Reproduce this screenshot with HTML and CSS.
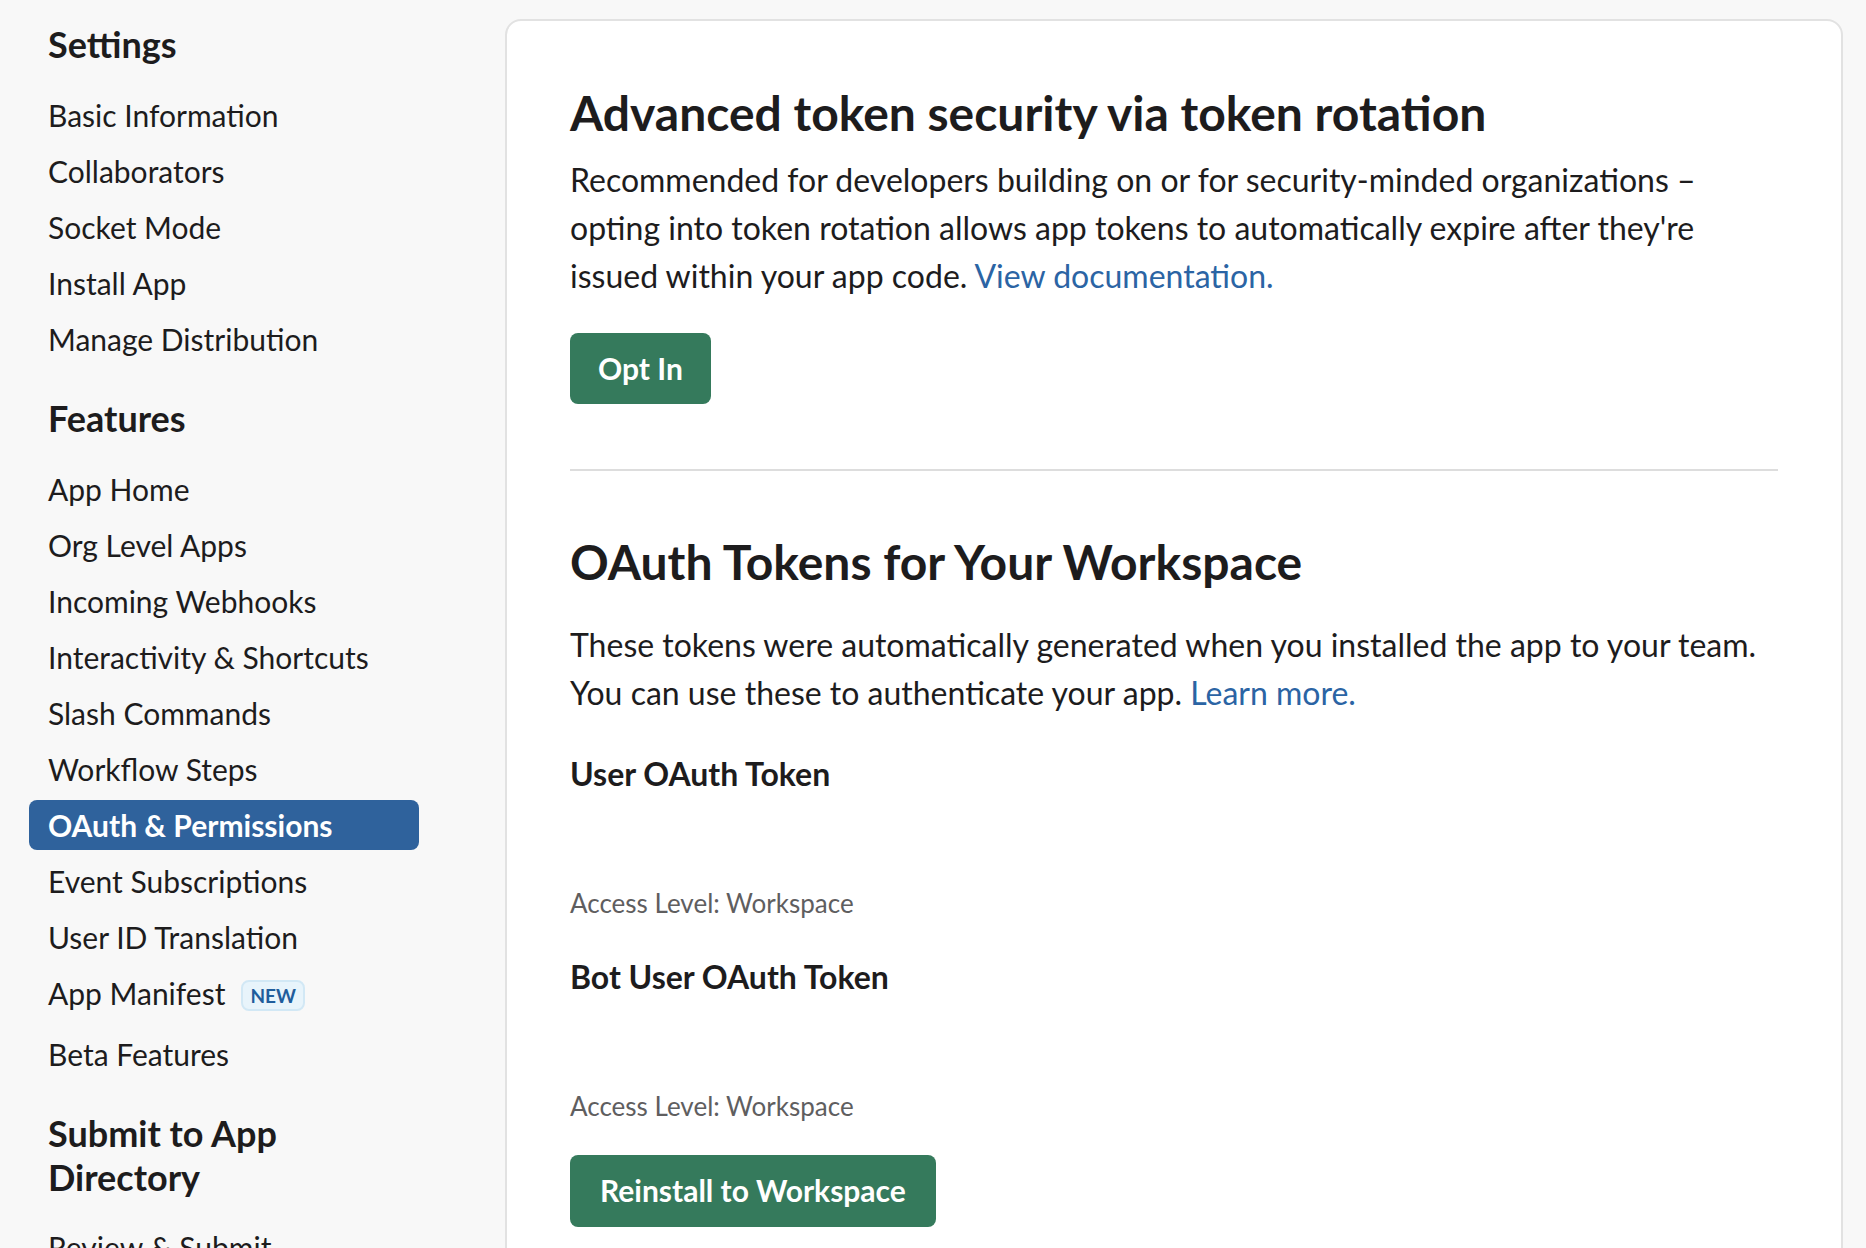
FILE: index.html
```html
<!DOCTYPE html>
<html lang="en">
<head>
<meta charset="utf-8">
<title>OAuth &amp; Permissions</title>
<link rel="stylesheet" href="styles.css">
</head>
<body>
<div class="page">
  <nav class="sidebar">
    <section class="nav-group">
      <h3 class="nav-heading">Settings</h3>
      <a class="nav-item">Basic Information</a>
      <a class="nav-item">Collaborators</a>
      <a class="nav-item">Socket Mode</a>
      <a class="nav-item">Install App</a>
      <a class="nav-item">Manage Distribution</a>
    </section>
    <section class="nav-group group-features">
      <h3 class="nav-heading">Features</h3>
      <a class="nav-item">App Home</a>
      <a class="nav-item">Org Level Apps</a>
      <a class="nav-item">Incoming Webhooks</a>
      <a class="nav-item">Interactivity &amp; Shortcuts</a>
      <a class="nav-item">Slash Commands</a>
      <a class="nav-item">Workflow Steps</a>
      <a class="nav-item active">OAuth &amp; Permissions</a>
      <a class="nav-item">Event Subscriptions</a>
      <a class="nav-item">User ID Translation</a>
      <a class="nav-item with-badge">App Manifest <span class="badge">NEW</span></a>
      <a class="nav-item">Beta Features</a>
    </section>
    <section class="nav-group group-submit">
      <h3 class="nav-heading">Submit to App Directory</h3>
      <a class="nav-item">Review &amp; Submit</a>
    </section>
  </nav>
  <main class="card">
    <h2 class="card-title">Advanced token security via token rotation</h2>
    <p class="card-text">Recommended for developers building on or for security-minded organizations – opting into token rotation allows app tokens to automatically expire after they're issued within your app code. <a class="link">View documentation.</a></p>
    <button class="btn btn-optin">Opt In</button>
    <hr class="divider">
    <h2 class="card-title title-second">OAuth Tokens for Your Workspace</h2>
    <p class="card-text text-second">These tokens were automatically generated when you installed the app to your team. You can use these to authenticate your app. <a class="link">Learn more.</a></p>
    <div class="token token-user">
      <h4 class="token-label">User OAuth Token</h4>
      <div class="token-field"></div>
      <div class="token-access">Access Level: Workspace</div>
    </div>
    <div class="token token-bot">
      <h4 class="token-label">Bot User OAuth Token</h4>
      <div class="token-field"></div>
      <div class="token-access">Access Level: Workspace</div>
    </div>
    <button class="btn btn-reinstall">Reinstall to Workspace</button>
  </main>
</div>
</body>
</html>
```
FILE: styles.css
```css
html, body {
  margin: 0;
  padding: 0;
  background: #f8f8f8;
  color: #1d1c1d;
  font-family: Lato, "Liberation Sans", sans-serif;
  overflow: hidden;
}

.page {
  display: flex;
  align-items: flex-start;
  height: 1248px;
}

.sidebar {
  width: 505px;
  flex: none;
  box-sizing: border-box;
  padding: 21.5px 86px 0 29px;
}

.nav-group {
  display: flex;
  flex-direction: column;
}

.group-features {
  margin-top: 29.5px;
}

.group-submit {
  margin-top: 29px;
}

.nav-heading {
  margin: 0 0 20px 19px;
  font-size: 36px;
  line-height: 45px;
  font-weight: 700;
}

.group-submit .nav-heading {
  line-height: 44px;
}

.nav-item {
  display: flex;
  align-items: center;
  height: 50px;
  margin: 3px 0;
  padding: 0 19px;
  border-radius: 8px;
  font-size: 30px;
  line-height: 50px;
  color: #1d1c1d;
  white-space: nowrap;
}

.nav-item.active {
  background: #2f629c;
  color: #ffffff;
  font-weight: 700;
}

.nav-item.with-badge {
  margin-bottom: 8px;
}

.badge {
  margin-left: 16px;
  margin-top: 4px;
  height: 27px;
  padding: 0 7px;
  border: 2px solid #d2e8f5;
  border-radius: 8px;
  background: #e8f4fb;
  color: #1f5d9c;
  font-size: 19px;
  font-weight: 700;
  line-height: 27px;
}

.card {
  flex: 1;
  margin: 19px 23px 0 0;
  min-height: 1400px;
  box-sizing: border-box;
  padding: 62.6px 63px 80px;
  background: #ffffff;
  border: 2px solid #e2e2e2;
  border-radius: 16px;
}

.card-title {
  margin: 0;
  font-size: 48px;
  line-height: 57.6px;
  font-weight: 700;
}

.title-second {
  margin-top: 62.1px;
}

.card-text {
  margin: 14.6px 0 0;
  font-size: 32px;
  line-height: 48px;
}

.text-second {
  margin-top: 31px;
}

.link {
  color: #2b64a4;
}

.btn {
  display: block;
  height: 71px;
  padding: 0 28px;
  border: none;
  border-radius: 8px;
  background: #357a5c;
  color: #ffffff;
  font-family: Lato, "Liberation Sans", sans-serif;
  font-size: 30px;
  font-weight: 700;
  line-height: 71px;
}

.btn-optin {
  margin-top: 33.2px;
}

.btn-reinstall {
  margin-top: 32.6px;
  height: 72px;
  padding: 0 30px;
}

.divider {
  margin: 64.7px 0 0;
  border: none;
  height: 2px;
  background: #dddddd;
}

.token-label {
  margin: 0;
  font-size: 32px;
  line-height: 38.4px;
  font-weight: 700;
}

.token-user .token-label {
  margin-top: 38px;
}

.token-bot .token-label {
  margin-top: 39.4px;
}

.token-field {
  height: 94px;
}

.token-access {
  font-size: 26px;
  line-height: 31.2px;
  color: #5f5e5f;
}
```
